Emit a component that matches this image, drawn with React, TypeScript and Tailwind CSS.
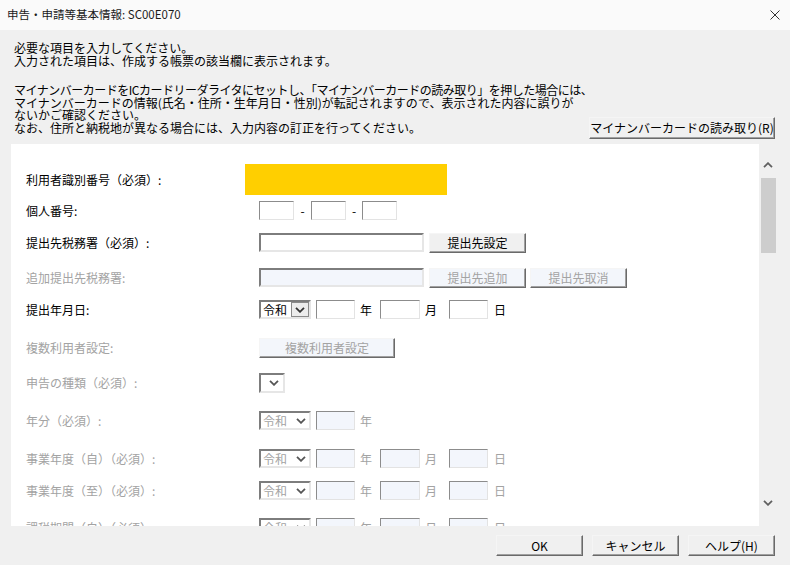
import type React from 'react';

const jp = "font-['Noto_Sans_CJK_JP','Noto_Sans',sans-serif]";

function Sunken({ className = '', disabled, children }: { className?: string; disabled?: boolean; children?: React.ReactNode }) {
  return (
    <div
      className={`flex items-center border border-t-[#8c8c8c] border-l-[#8c8c8c] border-r-[#e3e3e3] border-b-[#e3e3e3] ${
        disabled ? 'bg-[#f3f6fc]' : 'bg-white'
      } ${className}`}
    >
      {children}
    </div>
  );
}

function Field({ className = '', disabled }: { className?: string; disabled?: boolean }) {
  return (
    <div
      className={`border-2 border-t-[#7d7d7d] border-l-[#7d7d7d] border-r-[#e6e6e6] border-b-[#e6e6e6] ${
        disabled ? 'bg-[#f3f6fc]' : 'bg-white'
      } ${className}`}
    />
  );
}

function Btn({ className = '', disabled, children }: { className?: string; disabled?: boolean; children: React.ReactNode }) {
  return (
    <button
      type="button"
      className={`flex items-center justify-center whitespace-nowrap border border-t-[#f5f5f5] border-l-[#f5f5f5] border-r-[#6a6a6a] border-b-[#6a6a6a] shadow-[inset_-1px_-1px_0_#a0a0a0] text-[12px] leading-none ${
        disabled ? 'bg-[#f3f6fb] text-[#a3a3a3]' : 'bg-[#f0f0f0] text-black'
      } ${className}`}
    >
      {children}
    </button>
  );
}

function Chevron({ up, className = '' }: { up?: boolean; className?: string }) {
  return (
    <svg viewBox="0 0 10 6" className={className} fill="none" stroke="currentColor" strokeWidth="1.8">
      {up ? <path d="M1 5.2 5 1.2 9 5.2" /> : <path d="M1 0.8 5 4.8 9 0.8" />}
    </svg>
  );
}

function EraSelect({ disabled }: { disabled?: boolean }) {
  return (
    <div
      className={`flex h-full w-[52px] items-center border-2 border-t-[#7d7d7d] border-l-[#7d7d7d] border-r-[#e6e6e6] border-b-[#e6e6e6] bg-white ${
        disabled ? 'text-[#a3a3a3]' : 'text-black'
      }`}
    >
      <span className="pl-[2px] text-[12px] leading-none">令和</span>
      <div className="flex-1" />
      {disabled ? (
        <Chevron className="mr-[3px] h-[6px] w-[10px] text-[#555]" />
      ) : (
        <span className="flex h-[15px] w-[18px] items-center justify-center border border-[#8a8a8a] bg-[#ececec]">
          <Chevron className="h-[6px] w-[10px] text-[#333]" />
        </span>
      )}
    </div>
  );
}

function DateInputs({ disabled, full = true }: { disabled?: boolean; full?: boolean }) {
  const txt = disabled ? 'text-[#a3a3a3]' : 'text-black';
  return (
    <div className={`flex h-full items-center ${txt}`}>
      <EraSelect disabled={disabled} />
      <Sunken disabled={disabled} className="ml-[5px] h-full w-[39px]" />
      <span className="ml-[5px] w-[12px] text-[12px] leading-none">年</span>
      {full && (
        <>
          <Sunken disabled={disabled} className="ml-[8px] h-full w-[40px]" />
          <span className="ml-[5px] w-[12px] text-[12px] leading-none">月</span>
          <Sunken disabled={disabled} className="ml-[12px] h-full w-[39px]" />
          <span className="ml-[6px] w-[12px] text-[12px] leading-none">日</span>
        </>
      )}
    </div>
  );
}

function Label({ children, disabled }: { children: React.ReactNode; disabled?: boolean }) {
  return (
    <div className={`w-[233px] shrink-0 whitespace-nowrap text-[12px] leading-none ${disabled ? 'text-[#a3a3a3]' : 'text-black'}`}>
      {children}
    </div>
  );
}

export default function App() {
  return (
    <div className={`flex h-[565px] w-[790px] flex-col overflow-hidden bg-[#f0f0f0] ${jp}`}>
      <div className="flex h-[30px] shrink-0 items-center bg-[#fafafa] pl-[7px] pr-[10px]">
        <span className="text-[11.5px] leading-none text-[#1b1b1b]">申告・申請等基本情報: SC00E070</span>
        <div className="flex-1" />
        <svg viewBox="0 0 10 10" className="h-[10px] w-[10px] text-[#333]" stroke="currentColor" strokeWidth="1">
          <path d="M0.5 0.5 9.5 9.5M9.5 0.5 0.5 9.5" />
        </svg>
      </div>

      <div className="flex h-[114px] shrink-0 items-end pl-[14px] pr-[15px]">
        <div className="min-w-0 flex-1 whitespace-nowrap pb-[10px] text-[12px] leading-[12.5px] text-black">
          <p>必要な項目を入力してください。</p>
          <p>入力された項目は、作成する帳票の該当欄に表示されます。</p>
          <p className="mt-[17px] tracking-[-0.5px]">マイナンバーカードをICカードリーダライタにセットし、「マイナンバーカードの読み取り」を押した場合には、</p>
          <p>マイナンバーカードの情報(氏名・住所・生年月日・性別)が転記されますので、表示された内容に誤りが</p>
          <p>ないかご確認ください。</p>
          <p>なお、住所と納税地が異なる場合には、入力内容の訂正を行ってください。</p>
        </div>
        <Btn className="mb-[5px] h-[22px] w-[186px] shrink-0">マイナンバーカードの読み取り(R)</Btn>
      </div>

      <div className="ml-[11px] flex h-[382px] w-[766px] shrink-0">
        <div className="flex w-[748px] flex-col overflow-hidden bg-white pl-[15px]">
          <div className="mt-[20px] flex h-[31px] shrink-0 items-center">
            <Label>利用者識別番号（必須）:</Label>
            <div className="ml-[-14px] h-full w-[202px] bg-[#ffcf00]" />
          </div>

          <div className="mt-[6px] flex h-[19px] shrink-0 items-center">
            <Label>個人番号:</Label>
            <Sunken className="h-full w-[35px]" />
            <span className="w-[17px] text-center text-[12px] leading-none">-</span>
            <Sunken className="h-full w-[35px]" />
            <span className="w-[16px] text-center text-[12px] leading-none">-</span>
            <Sunken className="h-full w-[35px]" />
          </div>

          <div className="mt-[13px] flex h-[20px] shrink-0 items-center">
            <Label>提出先税務署（必須）:</Label>
            <Field className="h-[19px] w-[165px] self-start" />
            <Btn className="ml-[5px] h-full w-[97px]">提出先設定</Btn>
          </div>

          <div className="mt-[15px] flex h-[20px] shrink-0 items-center">
            <Label disabled>追加提出先税務署:</Label>
            <Field disabled className="h-[19px] w-[165px] self-start" />
            <Btn disabled className="ml-[5px] h-full w-[97px]">提出先追加</Btn>
            <Btn disabled className="ml-[4px] h-full w-[97px]">提出先取消</Btn>
          </div>

          <div className="mt-[12px] flex h-[19px] shrink-0 items-center">
            <Label>提出年月日:</Label>
            <DateInputs />
          </div>

          <div className="mt-[19px] flex h-[20px] shrink-0 items-center">
            <Label disabled>複数利用者設定:</Label>
            <Btn disabled className="h-full w-[136px]">複数利用者設定</Btn>
          </div>

          <div className="mt-[15px] flex h-[20px] shrink-0 items-center">
            <Label disabled>申告の種類（必須）:</Label>
            <div className="flex h-full w-[26px] items-center justify-end border-2 border-t-[#7d7d7d] border-l-[#7d7d7d] border-r-[#e6e6e6] border-b-[#e6e6e6] bg-white pr-[4px]">
              <Chevron className="h-[6px] w-[10px] text-[#555]" />
            </div>
          </div>

          <div className="mt-[18px] flex h-[19px] shrink-0 items-center">
            <Label disabled>年分（必須）:</Label>
            <DateInputs disabled full={false} />
          </div>

          <div className="mt-[19px] flex h-[19px] shrink-0 items-center">
            <Label disabled>事業年度（自）（必須）:</Label>
            <DateInputs disabled />
          </div>

          <div className="mt-[13px] flex h-[19px] shrink-0 items-center">
            <Label disabled>事業年度（至）（必須）:</Label>
            <DateInputs disabled />
          </div>

          <div className="mt-[18px] flex h-[19px] shrink-0 items-center">
            <Label disabled>課税期間（自）（必須）:</Label>
            <DateInputs disabled />
          </div>
        </div>

        <div className="flex w-[18px] flex-col items-center bg-[#f0f0f0]">
          <Chevron up className="mt-[18px] h-[6px] w-[10px] text-[#606060]" />
          <div className="ml-[1px] mt-[10px] h-[75px] w-[15px] bg-[#cdcdcd]" />
          <div className="flex-1" />
          <Chevron className="mb-[20px] h-[6px] w-[10px] text-[#606060]" />
        </div>
      </div>

      <div className="mt-[9px] flex justify-end gap-[9px] pr-[15px]">
        <Btn className="h-[21px] w-[87px]">OK</Btn>
        <Btn className="h-[21px] w-[87px]">キャンセル</Btn>
        <Btn className="h-[21px] w-[87px]">ヘルプ(H)</Btn>
      </div>
    </div>
  );
}
